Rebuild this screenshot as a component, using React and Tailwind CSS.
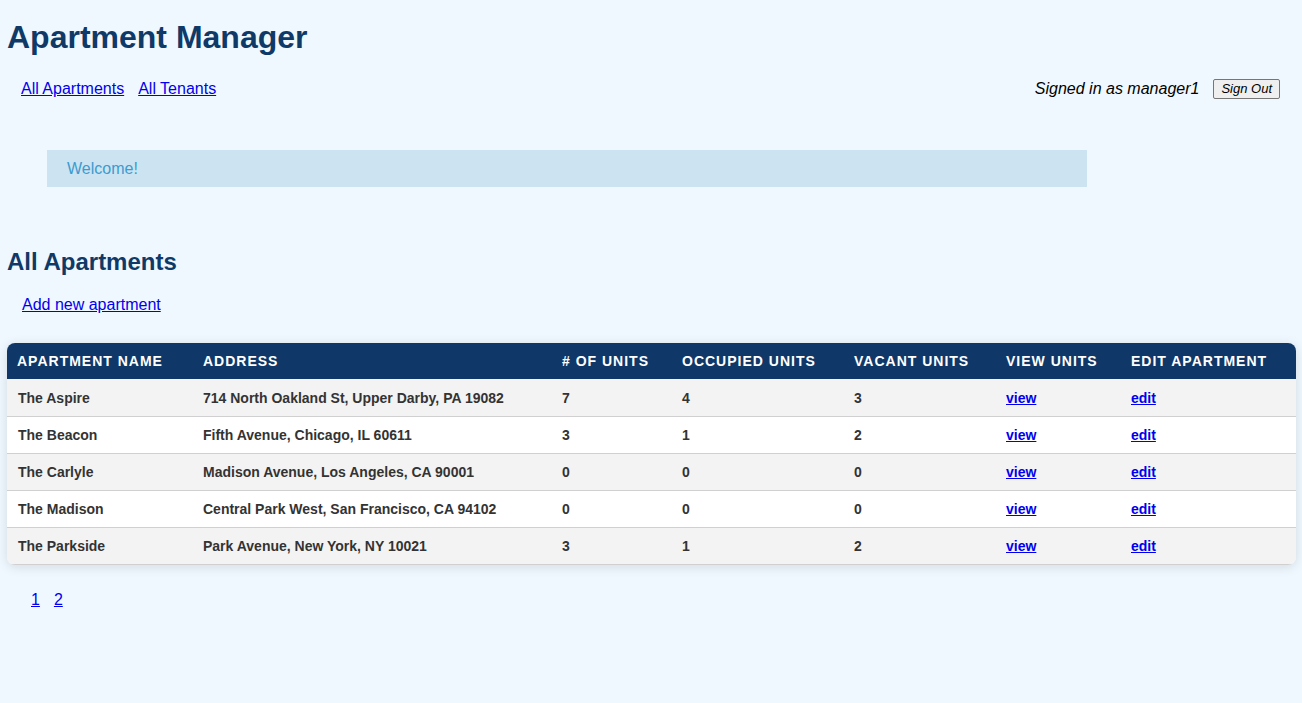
const apartments = [
    { name: "The Aspire", address: "714 North Oakland St, Upper Darby, PA 19082", units: 7, occupied: 4, vacant: 3 },
    { name: "The Beacon", address: "Fifth Avenue, Chicago, IL 60611", units: 3, occupied: 1, vacant: 2 },
    { name: "The Carlyle", address: "Madison Avenue, Los Angeles, CA 90001", units: 0, occupied: 0, vacant: 0 },
    { name: "The Madison", address: "Central Park West, San Francisco, CA 94102", units: 0, occupied: 0, vacant: 0 },
    { name: "The Parkside", address: "Park Avenue, New York, NY 10021", units: 3, occupied: 1, vacant: 2 },
];

const App = () => {
    return (
        <div
            className="min-h-[703px] bg-[#f0f8ff] pl-[7px] pr-[6px] pt-[19px] text-black"
            style={{ fontFamily: '"Liberation Sans", Arial, sans-serif' }}
        >
            <h1 className="text-[32px] font-bold leading-[37px] text-[#0f3a68]">Apartment Manager</h1>

            {/* Nav */}
            <div className="mt-[23px] flex items-center justify-between pl-[14px] pr-[16px]">
                <div className="flex gap-[14px] text-base leading-[18px]">
                    <a href="#" className="text-[#0000ee] underline">All Apartments</a>
                    <a href="#" className="text-[#0000ee] underline">All Tenants</a>
                </div>
                <div className="flex items-center gap-[14px]">
                    <span className="text-base italic leading-[18px]">Signed in as manager1</span>
                    <button className="h-[20px] rounded-[2px] border border-[#767676] bg-[#efefef] px-[7px] text-[13px] italic leading-[16px]">
                        Sign Out
                    </button>
                </div>
            </div>

            {/* Welcome */}
            <div className="ml-[40px] mt-[51px] w-[1040px] bg-[#cce4f1] px-[20px] py-[9px] text-base leading-[19px] text-[#3d9bcf]">
                Welcome!
            </div>

            <h2 className="mt-[61px] text-[24px] font-bold leading-[28px] text-[#0f3a68]">All Apartments</h2>
            <div className="mt-[20px] pl-[15px] text-base leading-[18px]">
                <a href="#" className="text-[#0000ee] underline">Add new apartment</a>
            </div>

            {/* Table */}
            <div className="mt-[29px] overflow-hidden rounded-[8px] shadow-[0_2px_12px_rgba(0,0,0,0.12)]">
                <table className="w-full border-collapse text-left text-[14px]">
                    <thead>
                        <tr className="h-[36px] bg-[#0f3868] text-white">
                            <th className="w-[186px] pl-[10px] font-bold uppercase tracking-[1px]">Apartment Name</th>
                            <th className="w-[359px] pl-[10px] font-bold uppercase tracking-[1px]">Address</th>
                            <th className="w-[120px] pl-[10px] font-bold uppercase tracking-[1px]"># of Units</th>
                            <th className="w-[172px] pl-[10px] font-bold uppercase tracking-[1px]">Occupied Units</th>
                            <th className="w-[152px] pl-[10px] font-bold uppercase tracking-[1px]">Vacant Units</th>
                            <th className="w-[125px] pl-[10px] font-bold uppercase tracking-[1px]">View Units</th>
                            <th className="pl-[10px] font-bold uppercase tracking-[1px]">Edit Apartment</th>
                        </tr>
                    </thead>
                    <tbody>
                        {apartments.map((apt, i) => (
                            <tr
                                key={apt.name}
                                className={`h-[37px] border-b border-[#d0d0d0] font-bold text-[#333] ${
                                    i % 2 === 0 ? "bg-[#f3f3f3]" : "bg-white"
                                }`}
                            >
                                <td className="pl-[11px] pt-[2px]">{apt.name}</td>
                                <td className="pl-[10px] pt-[2px]">{apt.address}</td>
                                <td className="pl-[10px] pt-[2px]">{apt.units}</td>
                                <td className="pl-[10px] pt-[2px]">{apt.occupied}</td>
                                <td className="pl-[10px] pt-[2px]">{apt.vacant}</td>
                                <td className="pl-[10px] pt-[2px]">
                                    <a href="#" className="text-[#0000ee] underline">view</a>
                                </td>
                                <td className="pl-[10px] pt-[2px]">
                                    <a href="#" className="text-[#0000ee] underline">edit</a>
                                </td>
                            </tr>
                        ))}
                    </tbody>
                </table>
            </div>

            {/* Pagination */}
            <div className="mt-[26px] flex gap-[14px] pl-[24px] text-base leading-[18px]">
                <a href="#" className="text-[#0000ee] underline">1</a>
                <a href="#" className="text-[#0000ee] underline">2</a>
            </div>
        </div>
    );
};

export default App;
